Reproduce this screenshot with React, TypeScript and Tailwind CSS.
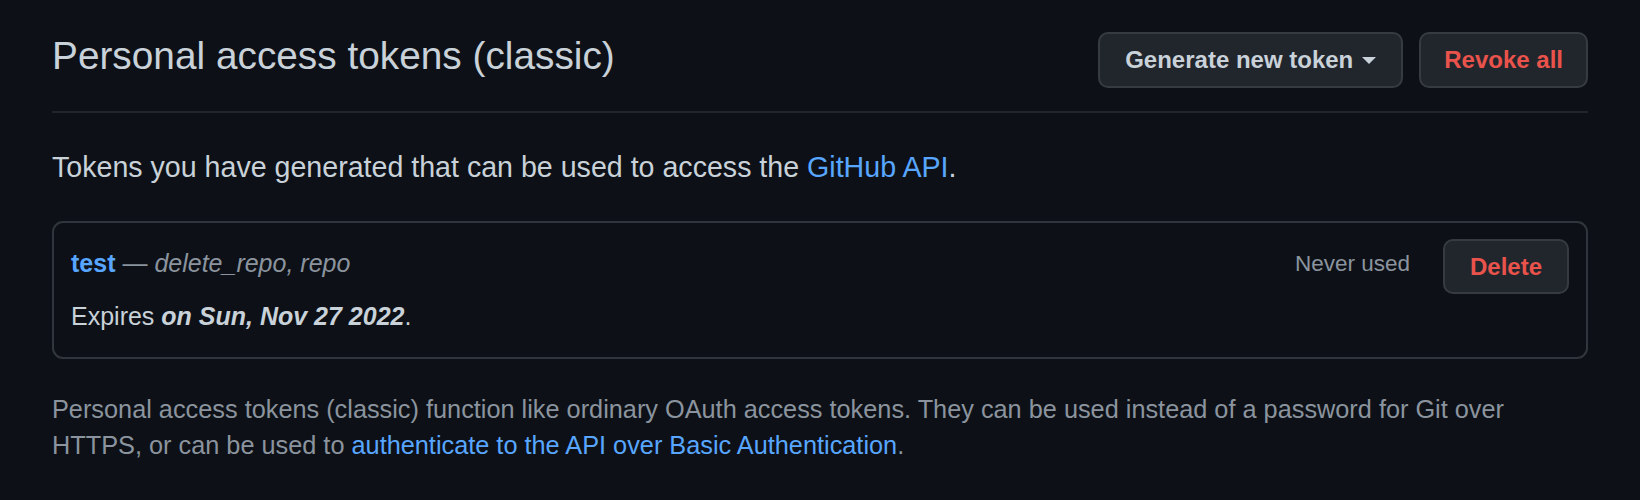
import React from "react";

export default function App() {
  return (
    <div
      className="w-full h-[500px] bg-[#0d1117] px-[52px] pt-[32px] text-[#c9d1d9]"
      style={{ fontFamily: '"Liberation Sans", Arial, sans-serif' }}
    >
      {/* Header */}
      <div className="flex items-start justify-between pb-[23px] border-b-2 border-[#21262d]">
        <h1 className="mt-[5px] text-[38.8px] leading-none font-normal text-[#c9d1d9]">
          Personal access tokens (classic)
        </h1>
        <div className="flex gap-[16px]">
          <button className="h-[56px] px-[25px] flex items-center gap-[9px] rounded-[10px] border-2 border-[#363b42] bg-[#21262d] text-[24px] font-bold text-[#c9d1d9]">
            <span>Generate new token</span>
            <span className="w-0 h-0 border-l-[7px] border-r-[7px] border-t-[7px] border-l-transparent border-r-transparent border-t-[#c9d1d9]" />
          </button>
          <button className="h-[56px] px-[23px] flex items-center rounded-[10px] border-2 border-[#363b42] bg-[#21262d] text-[24px] font-bold text-[#ea534b]">
            Revoke all
          </button>
        </div>
      </div>

      <p className="mt-[34px] text-[28.6px] leading-[40px]">
        Tokens you have generated that can be used to access the{" "}
        <a className="text-[#58a6ff]">GitHub API</a>.
      </p>

      {/* Token box */}
      <div className="mt-[34px] h-[138px] rounded-[11px] border-2 border-[#30363d] pt-[16px] pl-[17px] pr-[17px] flex justify-between items-start">
        <div className="mt-[6px] text-[25px]">
          <div className="leading-[37.5px]">
            <a className="font-bold text-[#58a6ff]">test</a>
            <span className="text-[#8b949e]">
              {" "}— <em>delete_repo, repo</em>
            </span>
          </div>
          <div className="mt-[15px] leading-[37.5px]">
            Expires <strong className="italic font-bold">on Sun, Nov 27 2022</strong>.
          </div>
        </div>
        <div className="flex items-center gap-[33px]">
          <span className="text-[22.5px] leading-[22.5px] pb-[4px] text-[#8b949e]">Never used</span>
          <button className="h-[55px] px-[25px] flex items-center rounded-[10px] border-2 border-[#363b42] bg-[#21262d] text-[24px] font-bold text-[#ea534b]">
            Delete
          </button>
        </div>
      </div>

      <p className="mt-[32px] text-[25.3px] leading-[36px] text-[#8b949e]">
        Personal access tokens (classic) function like ordinary OAuth access tokens. They can be
        used instead of a password for Git over HTTPS, or can be used to{" "}
        <a className="text-[#58a6ff]">authenticate to the API over Basic Authentication</a>.
      </p>
    </div>
  );
}
